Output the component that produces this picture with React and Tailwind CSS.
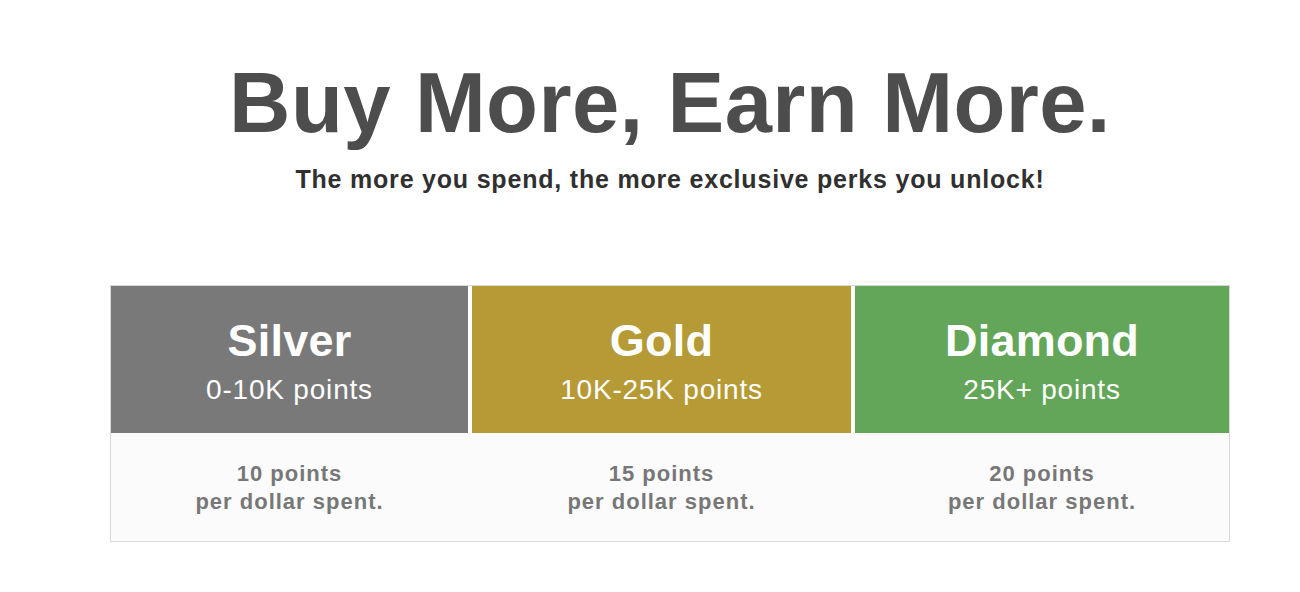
const tiers = [
  { name: 'Silver', range: '0-10K points', rate: '10 points', bg: 'bg-[#797979]' },
  { name: 'Gold', range: '10K-25K points', rate: '15 points', bg: 'bg-[#b59a36]' },
  { name: 'Diamond', range: '25K+ points', rate: '20 points', bg: 'bg-[#63a659]' },
]

export default function App() {
  return (
    <div className="min-h-[592px] bg-white font-['Liberation_Sans',Arial,sans-serif] flex flex-col items-center pl-[40px]">
      <h1 className="mt-[53px] text-[85px] leading-[100px] font-bold text-[#4d4d4d] tracking-[0.4px]">
        Buy More, Earn More.
      </h1>
      <p className="mt-[11px] text-[25px] leading-[30px] font-bold text-[#303030] tracking-[0.8px]">
        The more you spend, the more exclusive perks you unlock!
      </p>

      <div className="mt-[91px] w-[1120px] border border-[#d8d8d8] bg-[#fbfbfb]">
        <div className="grid grid-cols-[357fr_379fr_374fr] gap-x-1 bg-white">
          {tiers.map((t) => (
            <div key={t.name} className={`${t.bg} h-[147px] flex flex-col items-center pt-[29px] text-white`}>
              <div className="text-[45px] leading-[52px] font-bold tracking-[0.2px]">{t.name}</div>
              <div className="mt-[6px] text-[28px] leading-[34px] tracking-[0.8px]">{t.range}</div>
            </div>
          ))}
        </div>
        <div className="grid grid-cols-[357fr_379fr_374fr] gap-x-1">
          {tiers.map((t) => (
            <div key={t.name} className="h-[108px] flex flex-col items-center pt-[27px] text-[22px] leading-[28px] font-bold tracking-[1px] text-[#777]">
              <span>{t.rate}</span>
              <span>per dollar spent.</span>
            </div>
          ))}
        </div>
      </div>
    </div>
  )
}
